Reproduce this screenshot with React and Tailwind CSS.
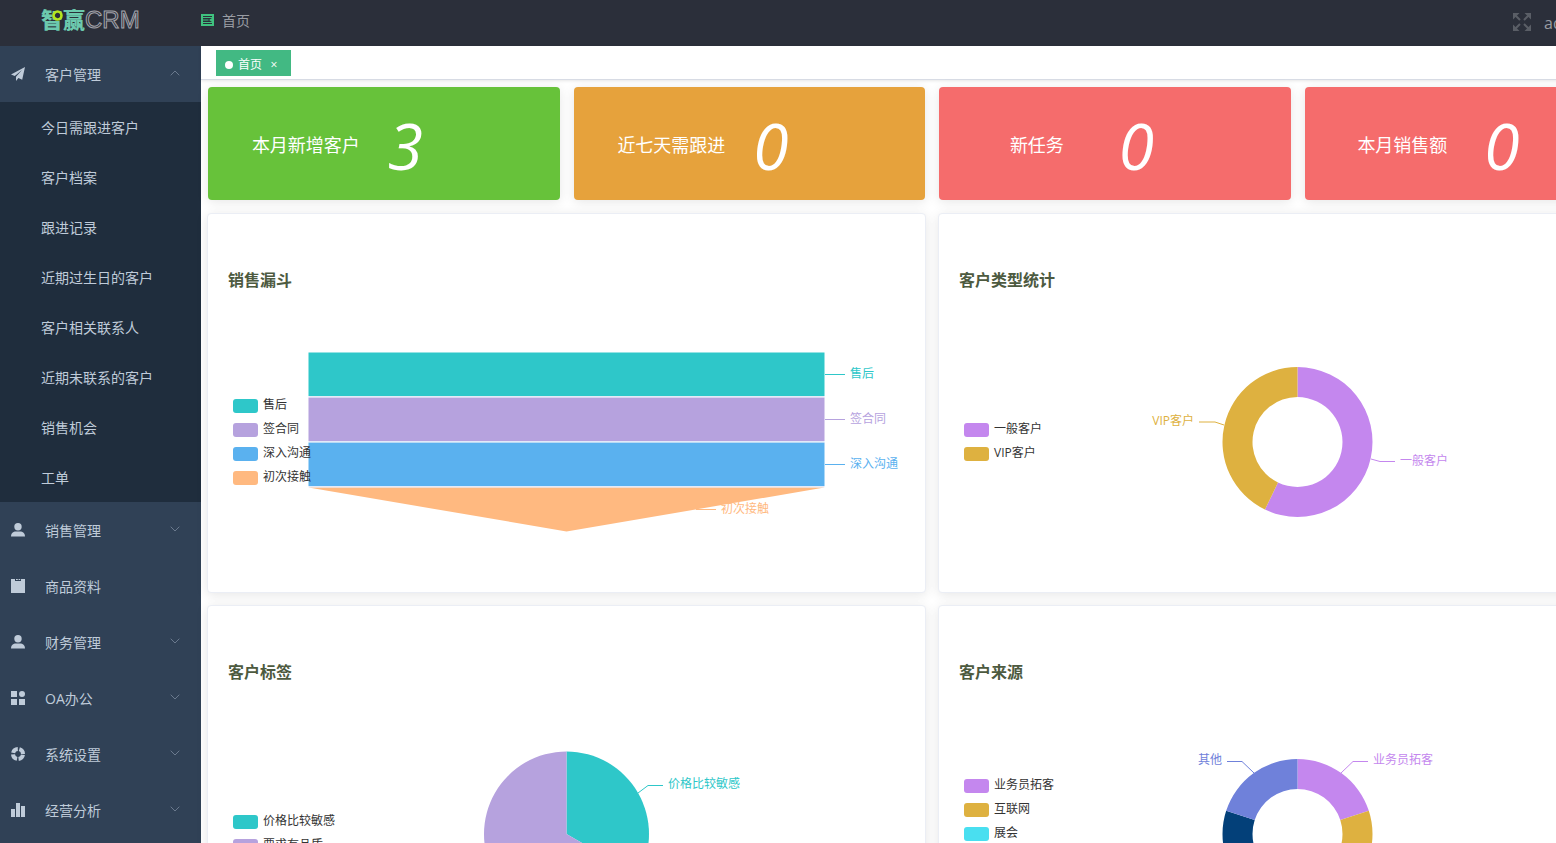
import React from "react";

const NAV_TOP = {
  label: "客户管理",
  icon: "plane",
  open: true,
  children: [
    "今日需跟进客户",
    "客户档案",
    "跟进记录",
    "近期过生日的客户",
    "客户相关联系人",
    "近期未联系的客户",
    "销售机会",
    "工单",
  ],
};

const NAV = [
  NAV_TOP,
  { label: "销售管理", icon: "user", group: true },
  { label: "商品资料", icon: "goods" },
  { label: "财务管理", icon: "user", group: true },
  { label: "OA办公", icon: "menu", group: true },
  { label: "系统设置", icon: "help", group: true },
  { label: "经营分析", icon: "data", group: true },
];

const STATS = [
  { label: "本月新增客户", value: "3", color: "bg-[#67c23a]" },
  { label: "近七天需跟进", value: "0", color: "bg-[#e6a23c]" },
  { label: "新任务", value: "0", color: "bg-[#f56c6c]" },
  { label: "本月销售额", value: "0", color: "bg-[#f56c6c]" },
];

function NavIcon({ name }) {
  return (
    <svg viewBox="0 0 14 14" className="size-[14px] shrink-0" fill="currentColor" aria-hidden="true">
      {name === "plane" && (
        <path d="M14 0 0 7.400l3.800 1.700L11 3 5 9.800V14l2.400-3 3.800 1.700z" />
      )}
      {name === "user" && (
        <>
          <circle cx="7" cy="3.700" r="3.700" />
          <path d="M0 13.600c0-3.600 2.200-5.200 5-5.200h4c2.800 0 5 1.600 5 5.200z" />
        </>
      )}
      {name === "goods" && (
        <path d="M0 0h4v2h6V0h4v14H0zM5 0h1.800v1H5zM7.600 0h1.600v1H7.600z" />
      )}
      {name === "menu" && (
        <>
          <path d="M0 0h6v6H0zM0 8h6v6H0zM8 8h6v6H8z" />
          <circle cx="11" cy="3" r="3" />
        </>
      )}
      {name === "help" && (
        <circle
          cx="7"
          cy="7"
          r="5"
          fill="none"
          stroke="currentColor"
          strokeWidth="4"
          strokeDasharray="6.250 1.604"
          strokeDashoffset="-0.802"
        />
      )}
      {name === "data" && <path d="M0 6h4v8H0zM5 0h4v14H5zM10 3h4v11h-4z" />}
    </svg>
  );
}

function Chevron({ up }) {
  return (
    <svg viewBox="0 0 10 6" className="mb-0.5 ml-auto h-[6px] w-[10px]" fill="none" stroke="#6b7a8e" aria-hidden="true">
      <path d={up ? "M.7 5.300 5 1l4.300 4.300" : "M.7.7 5 5 9.300.7"} />
    </svg>
  );
}

function Sidebar() {
  return (
    <nav className="w-[201px] shrink-0 bg-[#304156] text-sm text-[#bfcbd9]">
      <ul>
        {NAV.map((item) => (
          <li key={item.label}>
            <button
              type="button"
              aria-expanded={item.group || item.open ? Boolean(item.open) : undefined}
              className="flex h-14 w-full items-center pr-[21px] pl-[11px] text-left"
            >
              <NavIcon name={item.icon} />
              <span className="ml-5 pt-0.5">{item.label}</span>
              {(item.group || item.open) && <Chevron up={item.open} />}
            </button>
            {item.children && (
              <ul className="bg-[#1f2d3d]">
                {item.children.map((child) => (
                  <li key={child}>
                    <a href="#" className="flex h-[50px] items-center pt-0.5 pl-[41px]">
                      {child}
                    </a>
                  </li>
                ))}
              </ul>
            )}
          </li>
        ))}
      </ul>
    </nav>
  );
}

function Logo() {
  return (
    <a href="#" className="relative flex h-10 w-40 items-center pl-px leading-none">
      <span className="pb-0.5 text-[22px] font-black text-[#6cc9ae]">智赢</span>
      <span
        className="text-2xl text-transparent [-webkit-text-stroke:1px_#a3a4ab]"
        style={{ fontFamily: '"Liberation Sans", sans-serif' }}
      >
        CRM
      </span>
      <svg viewBox="0 0 10 10" className="absolute top-[10px] left-3 size-[11px]" fill="#2b2f3a" stroke="#b4e61e" strokeWidth="2.400" aria-hidden="true">
        <circle cx="5" cy="5" r="3.600" />
      </svg>
    </a>
  );
}

function Header() {
  return (
    <header className="flex h-[46px] items-start bg-[#2b2f3a] pl-10">
      <Logo />
      <div className="flex h-10 grow items-center">
        <button type="button" aria-label="折叠菜单" className="ml-px">
          <svg viewBox="0 0 13 12" className="h-3 w-[13px]" fill="none" stroke="#3fc27f" aria-hidden="true">
            <path strokeWidth="2" d="M1 1h11v10H1z" />
            <path strokeWidth="1" d="M2 3.500h9M2 6h5.500M2 8.500h9" />
            <path fill="#3fc27f" stroke="none" d="M11 4v4L8 6z" />
          </svg>
        </button>
        <a href="#" className="ml-2 pt-0.5 text-sm text-[#999ca3]">首页</a>
      </div>
      <div className="flex h-11 w-[150px] items-center gap-[13px]">
        <button type="button" aria-label="全屏">
          <svg viewBox="0 0 18 18" className="size-[18px]" fill="#5a5e66" stroke="#5a5e66" strokeWidth="2" aria-hidden="true">
            <path stroke="none" d="M0 0h6.500L0 6.500zM18 0h-6.500L18 6.500zM0 18h6.500L0 11.500zM18 18h-6.500l6.500-6.500z" />
            <path d="m2 2 5 5M16 2l-5 5M2 16l5-5M16 16l-5-5" />
          </svg>
        </button>
        <button type="button" className="pt-0.5 text-base text-[#999ca3]">admin</button>
      </div>
    </header>
  );
}

function Tabs() {
  return (
    <div className="flex h-[34px] items-start border-b border-[#d8dce5] pt-1 pl-[15px] shadow-[0_1px_3px_rgba(0,0,0,0.1)]">
      <div className="flex h-[26px] items-center bg-[#42b983] px-[9px] pt-1 text-xs text-white">
        <span className="mr-[5px] size-2 rounded-full bg-white" />
        <a href="#">首页</a>
        <button type="button" aria-label="关闭" className="ml-1 w-4 text-center text-xs">
          ×
        </button>
      </div>
    </div>
  );
}

function StatCard({ label, value, color }) {
  return (
    <section
      className={`grid h-[113px] grid-cols-2 items-center rounded px-5 text-white shadow-[0_2px_12px_rgba(0,0,0,0.1)] ${color}`}
    >
      <h2 className="pt-0.5 text-center text-lg">{label}</h2>
      <em className="pt-1 pl-1 text-[64px] leading-none font-medium">{value}</em>
    </section>
  );
}

function Panel({ title, children }) {
  return (
    <section className="rounded border border-[#ebeef5] bg-white shadow-[0_2px_12px_rgba(0,0,0,0.1)]">
      <h2 className="pt-[54px] pl-5 text-base font-bold text-[#4d5a3f]">{title}</h2>
      <svg viewBox="0 0 717 300" className="block w-full" fontSize="12" role="img" aria-label={title}>
        {children}
      </svg>
    </section>
  );
}

function Legend({ items, top }) {
  return items.map(([label, color], i) => (
    <g key={label}>
      <rect x="25" y={top + i * 24} width="25" height="14" rx="3" fill={color} />
      <text x="55" y={top + 10 + i * 24} fill="#333">
        {label}
      </text>
    </g>
  ));
}

function Callout({ points, x, y, color, end, children }) {
  return (
    <>
      <polyline points={points} fill="none" stroke={color} />
      <text x={x} y={y} fill={color} textAnchor={end ? "end" : "start"}>
        {children}
      </text>
    </>
  );
}

function slicePath(from, to, outer, inner) {
  const at = (deg, r) => {
    const a = (deg * Math.PI) / 180;
    return `${358.5 + r * Math.sin(a)} ${150 - r * Math.cos(a)}`;
  };
  const large = to - from > 180 ? 1 : 0;
  const back = inner ? `L${at(to, inner)}A${inner} ${inner} 0 ${large} 0 ${at(from, inner)}` : "L358.5 150";
  return `M${at(from, outer)}A${outer} ${outer} 0 ${large} 1 ${at(to, outer)}${back}Z`;
}

function Slices({ data, outer, inner }) {
  return data.map(([from, to, color]) => <path key={from} d={slicePath(from, to, outer, inner)} fill={color} />);
}

const FUNNEL = [
  ["售后", "#2ec7c9"],
  ["签合同", "#b6a2de"],
  ["深入沟通", "#5ab1ef"],
  ["初次接触", "#ffb980"],
];

function FunnelChart() {
  return (
    <>
      {FUNNEL.slice(0, 3).map(([label, color], i) => (
        <g key={label}>
          <rect x="100.500" y={60.5 + i * 45} width="516" height="43.500" fill={color} />
          <Callout points={`617,${82.5 + i * 45} 637,${82.5 + i * 45}`} x={642} y={86 + i * 45} color={color}>
            {label}
          </Callout>
        </g>
      ))}
      <path d="M100.500 195.500H616.500L358.500 239.500Z" fill="#ffb980" />
      <Callout points="488,217.500 508,217.500" x={513} y={221} color="#ffb980">
        初次接触
      </Callout>
      <path d="M100.500 104.800H616.500M100.500 149.800H616.500M100.500 194.800H616.500" stroke="#d8e2f5" />
      <Legend items={FUNNEL} top={107} />
    </>
  );
}

export default function App() {
  return (
    <div
      className="h-screen overflow-hidden bg-white"
      style={{ fontFamily: '"Open Sans", "Noto Sans CJK SC", sans-serif' }}
    >
      <div className="min-w-[1663px]">
        <Header />
        <div className="flex">
          <Sidebar />
          <main className="min-w-0 grow">
            <Tabs />
            <div className="grid grid-cols-4 gap-[14px] px-[7px] pt-[7px]">
              {STATS.map((s) => (
                <StatCard key={s.label} {...s} />
              ))}
            </div>
            <div className="grid grid-cols-2 gap-3 px-[6px] pt-[13px]">
              <Panel title="销售漏斗">
                <FunnelChart />
              </Panel>
              <Panel title="客户类型统计">
                <Slices data={[[0, 205.7, "#c487ee"], [205.7, 360, "#deb140"]]} outer={75} inner={45} />
                <Callout points="432,167 441,169.500 456,169.500" x={461} y={173} color="#c487ee">
                  一般客户
                </Callout>
                <Callout points="285,133 276,130 260,130" x={255} y={133} color="#deb140" end>
                  VIP客户
                </Callout>
                <Legend items={[["一般客户", "#c487ee"], ["VIP客户", "#deb140"]]} top={131} />
              </Panel>
              <Panel title="客户标签">
                <Slices data={[[0, 120, "#2ec7c9"], [120, 360, "#b6a2de"]]} outer={82.5} inner={0} />
                <Callout points="430,109 440,101.500 455,101.500" x={460} y={104} color="#2ec7c9">
                  价格比较敏感
                </Callout>
                <Legend items={[["价格比较敏感", "#2ec7c9"], ["要求有品质", "#b6a2de"]]} top={131} />
              </Panel>
              <Panel title="客户来源">
                <Slices
                  data={[
                    [0, 72, "#c487ee"],
                    [72, 144, "#deb140"],
                    [144, 216, "#49dff0"],
                    [216, 288, "#034079"],
                    [288, 360, "#6f81da"],
                  ]}
                  outer={75}
                  inner={45}
                />
                <Callout points="402,89 414,77.500 429,77.500" x={434} y={80} color="#c487ee">
                  业务员拓客
                </Callout>
                <Callout points="315,89 303,77.500 288,77.500" x={283} y={80} color="#6f81da" end>
                  其他
                </Callout>
                <Legend items={[["业务员拓客", "#c487ee"], ["互联网", "#deb140"], ["展会", "#49dff0"]]} top={95} />
              </Panel>
            </div>
          </main>
        </div>
      </div>
    </div>
  );
}
